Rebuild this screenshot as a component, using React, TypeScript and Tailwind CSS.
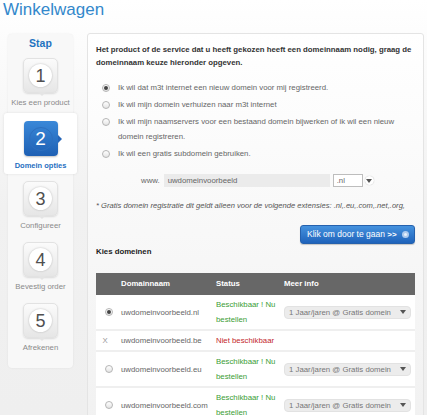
import React from "react";

const steps = [
  { n: 1, label: "Kies een product" },
  { n: 2, label: "Domein opties", active: true },
  { n: 3, label: "Configureer" },
  { n: 4, label: "Bevestig order" },
  { n: 5, label: "Afrekenen" },
];

const options = [
  { text: "Ik wil dat m3t internet een nieuw domein voor mij registreerd.", checked: true },
  { text: "Ik wil mijn domein verhuizen naar m3t internet" },
  {
    text: "Ik wil mijn naamservers voor een bestaand domein bijwerken of ik wil een nieuw",
    extra: "domein registreren.",
  },
  { text: "Ik wil een gratis subdomein gebruiken." },
];

const domains = [
  { name: "uwdomeinvoorbeeld.nl", ok: true, checked: true },
  { name: "uwdomeinvoorbeeld.be", ok: false },
  { name: "uwdomeinvoorbeeld.eu", ok: true },
  { name: "uwdomeinvoorbeeld.com", ok: true },
];

function Radio({ checked }: { checked?: boolean }) {
  return (
    <span className="flex h-[8px] w-[8px] shrink-0 items-center justify-center rounded-full border border-[#b5b5b5] bg-gradient-to-b from-[#ffffff] to-[#e4e4e4]">
      {checked && <span className="h-[4px] w-[4px] rounded-full bg-[#444]" />}
    </span>
  );
}

function Caret({ className }: { className?: string }) {
  return (
    <svg width="6" height="4" viewBox="0 0 6 4" className={className}>
      <path d="M0 0 L6 0 L3 4 Z" fill="#555" />
    </svg>
  );
}

function StepIcon({ n, active }: { n: number; active?: boolean }) {
  if (active) {
    return (
      <div className="relative mx-auto flex h-[35px] w-[34px] items-center justify-center rounded-[4px] bg-gradient-to-b from-[#3a88d8] to-[#1e60b4] shadow-[0_1px_2px_rgba(0,0,0,0.25)]">
        <div className="flex h-[24px] w-[24px] items-center justify-center rounded-full border border-[#2d6fbe] text-[19px] leading-none text-white">
          {n}
        </div>
        <span className="absolute right-[-4px] top-[14px] h-0 w-0 border-y-[4px] border-l-[4px] border-y-transparent border-l-[#2565b8]" />
      </div>
    );
  }
  return (
    <div className="relative mx-auto flex h-[35px] w-[35px] items-center justify-center rounded-[5px] border border-[#e2e2e2] bg-gradient-to-b from-[#fbfbfb] to-[#e6e6e6] shadow-[0_1px_2px_rgba(0,0,0,0.12)]">
      <div className="flex h-[23px] w-[23px] items-center justify-center rounded-full bg-white text-[18px] leading-none text-[#505050] shadow-[0_0_2px_rgba(0,0,0,0.25)]">
        {n}
      </div>
      <span className="absolute bottom-[-4px] left-[14px] h-0 w-0 border-x-[4px] border-t-[4px] border-x-transparent border-t-[#e4e4e4]" />
    </div>
  );
}

export default function App() {
  return (
    <div className="h-[415px] w-[427px] overflow-hidden bg-gradient-to-b from-[#ffffff] via-[#f1f1f1] to-[#efefef] font-['Liberation_Sans',Arial,sans-serif]">
      {/* Title */}
      <h1 className="pl-[3px] text-[17px] font-normal leading-[20px] text-[#3388cb]">Winkelwagen</h1>

      <div className="mt-[13px] flex items-start">
        {/* Steps sidebar */}
        <div className="ml-[8px] mt-[1px] w-[65px] rounded-[4px] bg-[#f8f8f8] pb-[11px] pt-[2px] shadow-[0_0_2px_rgba(0,0,0,0.08)]">
          <div className="text-center text-[10.5px] font-bold leading-[14px] text-[#1f73c0]">Stap</div>
          {steps.map((s, i) =>
            s.active ? (
              <div
                key={s.n}
                className="-mx-[4px] mt-[1px] rounded-[3px] bg-white pb-[2px] pt-[8px] shadow-[0_0_3px_rgba(0,0,0,0.1)]"
              >
                <StepIcon n={s.n} active />
                <div className="mt-[4px] text-center text-[7.5px] font-bold leading-[12px] text-[#1f6fbf]">
                  {s.label}
                </div>
              </div>
            ) : (
              <div key={s.n} className={i === 0 ? "pb-[3px] pt-[8px]" : "pb-[3px] pt-[7px]"}>
                <StepIcon n={s.n} />
                <div className="mt-[4px] whitespace-nowrap text-center text-[7.8px] leading-[12px] text-[#8a8a8a]">
                  {s.label}
                </div>
              </div>
            )
          )}
        </div>

        {/* Main panel */}
        <div className="ml-[14px] h-[400px] w-[337px] rounded-[3px] border border-[#e4e4e4] bg-gradient-to-b from-[#ffffff] to-[#f1f1f1] pl-[8px] pr-[8px] pt-[9px]">
          <p className="text-[7.8px] font-bold leading-[13px] text-[#333]">
            Het product of de service dat u heeft gekozen heeft een domeinnaam nodig, graag de
            <br />
            domeinnaam keuze hieronder opgeven.
          </p>

          <div className="mt-[11px] pl-[6px]">
            {options.map((o, i) => (
              <div key={i} className="mb-[2px] flex items-start gap-[8px]">
                <div className="flex h-[15px] items-center">
                  <Radio checked={o.checked} />
                </div>
                <div className="text-[7.8px] leading-[15px] text-[#666]">
                  {o.text}
                  {o.extra && (
                    <>
                      <br />
                      {o.extra}
                    </>
                  )}
                </div>
              </div>
            ))}
          </div>

          {/* www input */}
          <div className="mt-[13px] flex h-[13px] items-center pl-[45px] text-[7.8px] text-[#666]">
            <span className="mr-[4px]">www.</span>
            <div className="flex h-[13px] w-[166px] items-center bg-[#ebebeb] pl-[4px] text-[#666]">
              uwdomeinvoorbeeld
            </div>
            <div className="ml-[3px] flex h-[13px] w-[30px] items-center border border-[#bdbdbd] bg-white pl-[3px] text-[#666]">
              .nl
            </div>
            <div className="ml-[2px] flex h-[9px] w-[9px] items-center justify-center rounded-full bg-white shadow-[0_0_1px_rgba(0,0,0,0.3)]">
              <Caret />
            </div>
          </div>

          <p className="mt-[13px] text-[7.6px] italic leading-[12px] text-[#555]">
            * Gratis domein registratie dit geldt alleen voor de volgende extensies: .nl,.eu,.com,.net,.org,
          </p>

          <div className="mt-[13px] flex justify-end">
            <button className="flex h-[19px] w-[115px] items-center justify-between rounded-[3px] border border-[#2561ad] bg-gradient-to-b from-[#4592de] to-[#1f63bb] pl-[6px] pr-[5px] text-[8.5px] text-white shadow-[0_1px_1px_rgba(0,0,0,0.2)]">
              <span>
                Klik om door te gaan <b className="text-[8px]">&gt;&gt;</b>
              </span>
              <span className="flex h-[7px] w-[7px] items-center justify-center rounded-full bg-[#aecbee]">
                <span className="h-[3px] w-[3px] rounded-full bg-[#e8f1fb]" />
              </span>
            </button>
          </div>

          <h2 className="mt-[2px] text-[7.8px] font-bold leading-[12px] text-[#222]">Kies domeinen</h2>

          {/* Domain table */}
          <div className="mt-[15px]">
            <div className="grid h-[22px] grid-cols-[25px_95px_68px_1fr] items-center bg-[#676767] text-[7.8px] font-bold text-white">
              <span />
              <span>Domainnaam</span>
              <span>Status</span>
              <span>Meer info</span>
            </div>
            {domains.map((d) => (
              <div
                key={d.name}
                className="grid grid-cols-[25px_95px_68px_1fr] items-center border-b-[2px] border-[#efefef] bg-white py-[2px] text-[7.8px] leading-[15px]"
              >
                <span className="flex justify-center pl-[1px]">
                  {d.ok ? <Radio checked={d.checked} /> : <span className="-ml-[8px] text-[#999]">X</span>}
                </span>
                <span className="text-[#666]">{d.name}</span>
                {d.ok ? (
                  <span className="text-[#3a9d35]">
                    Beschikbaar ! Nu
                    <br />
                    bestellen
                  </span>
                ) : (
                  <span className="text-[#c3262c]">Niet beschikbaar</span>
                )}
                {d.ok ? (
                  <div className="mr-[4px] flex h-[13px] items-center justify-between rounded-[4px] border border-[#e2e2e2] bg-[#ececec] pl-[4px] pr-[4px] text-[#777]">
                    <span>1 Jaar/jaren @ Gratis domein</span>
                    <Caret />
                  </div>
                ) : (
                  <span />
                )}
              </div>
            ))}
          </div>
        </div>
      </div>
    </div>
  );
}
